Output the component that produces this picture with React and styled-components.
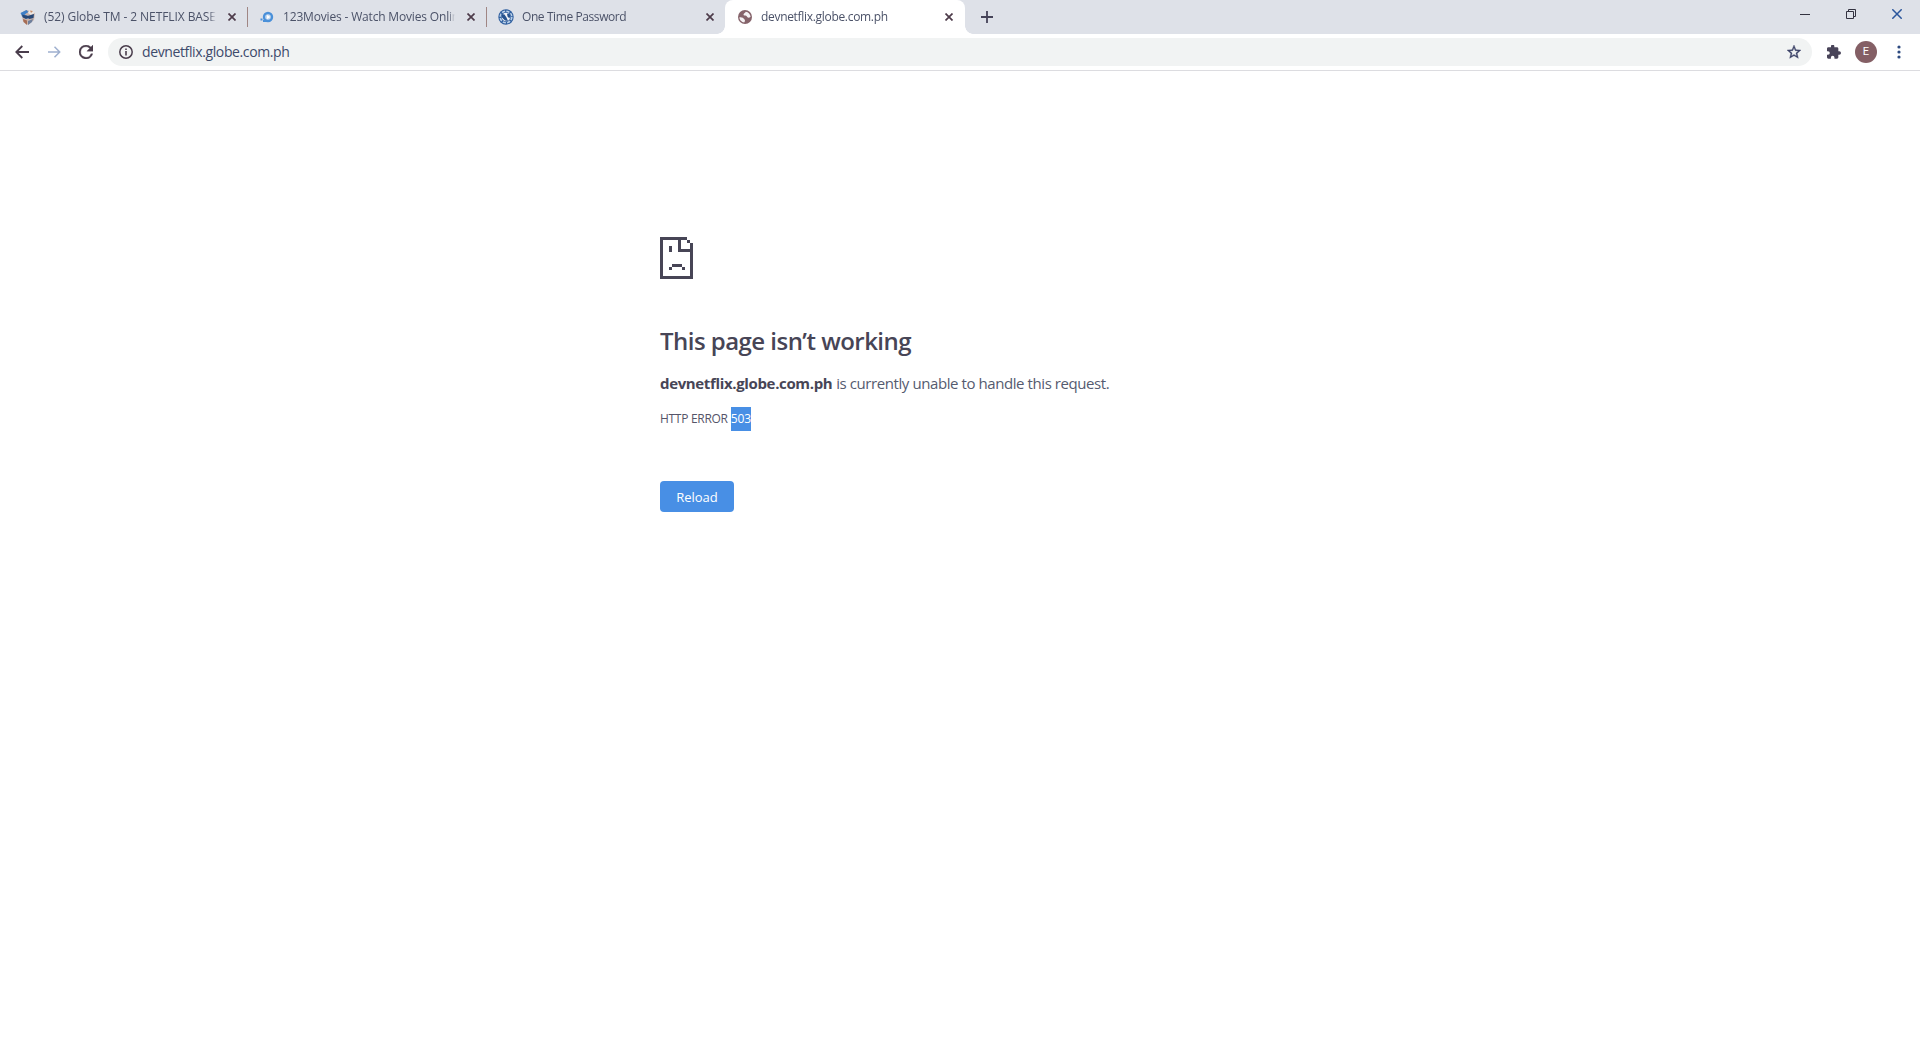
import React from 'react';
import styled, { createGlobalStyle } from 'styled-components';

const GlobalStyle = createGlobalStyle`
  * {
    box-sizing: border-box;
  }

  body {
    margin: 0;
    background: #fff;
    font-family: 'Open Sans', 'Noto Sans', sans-serif;
    color: #474556;
    overflow: hidden;
  }

  h1, p {
    margin: 0;
  }
`;

const CloseIcon = () => (
  <svg width="8" height="8" viewBox="0 0 8 8">
    <path d="M0.5 0.5L7.5 7.5M7.5 0.5L0.5 7.5" stroke="#4d3b4a" strokeWidth="1.7" />
  </svg>
);

const BoxFavicon = () => (
  <svg width="16" height="16" viewBox="0 0 16 16">
    <path d="M1 4l5-3 4 1 5 2-1 7-6 5-5-4z" fill="#c9b3aa" />
    <path d="M0.500 4l6-3 2 2-4 2.500 4 1.500-1 3-5-2z" fill="#3f80c8" />
    <path d="M9 2l3-1 3 3-4 2-3-2z" fill="#ece6e3" />
    <path d="M10 1.500l3 .5-2 2z" fill="#c98d67" />
    <path d="M2 5.500l5.500 1.500 6.500-2-.5 4-4 1-2-1-1.500 1-3-1.500z" fill="#294876" />
    <path d="M3 10l4 1.500V16l-3.500-3z" fill="#a66d55" />
    <path d="M8 12l5-2-1 3-4 3z" fill="#6e7f9d" />
  </svg>
);

const PlayFavicon = () => (
  <svg width="16" height="16" viewBox="0 0 16 16">
    <circle cx="9" cy="8" r="5.200" fill="#4a90d9" />
    <circle cx="9" cy="8" r="2.800" fill="#c7daf0" />
    <path d="M8 6l3.200 2L8 10z" fill="#fff" />
    <path d="M1.500 10.500h2M4 12h3" stroke="#4a90d9" strokeWidth="2" />
  </svg>
);

const GlobeFavicon = () => (
  <svg width="16" height="16" viewBox="0 0 16 16">
    <circle cx="8" cy="8" r="7.700" fill="#2f5f9f" />
    <circle cx="8" cy="8" r="5.800" fill="none" stroke="#b9cfe8" strokeWidth="1.600" strokeDasharray="3.200 1.300" />
    <circle cx="8" cy="8" r="4.300" fill="#f1f3f7" />
    <path d="M3.500 5l3 .5 2 3 1.500 3.500-3-.5-3-3zM9 4.500l3.500 1-1 4-2-2z" fill="#28548f" />
  </svg>
);

const WorldFavicon = () => (
  <svg width="14" height="14" viewBox="2 2 20 20">
    <circle cx="12" cy="12" r="10" fill="#85636a" />
    <path d="M4 12.500c2 0 5 0 6 1.500s2 1.500 2 3-1 2-1 3c-4-.5-7-4-7-7.500zM13 4.500c4 .5 6.500 3.500 7 7-1.500 1.500-3 2-4.500 1-1.500-1.200-1-2.500-3-2.500s-3-.5-2.500-2 2.500-1.500 3-3.500z" fill="#f4f1f3" />
  </svg>
);

const TABS = [
  { title: '(52) Globe TM - 2 NETFLIX BASED', icon: BoxFavicon, spacing: -0.08 },
  { title: '123Movies - Watch Movies Online', icon: PlayFavicon, spacing: -0.17 },
  { title: 'One Time Password', icon: GlobeFavicon, spacing: -0.41 },
  { title: 'devnetflix.globe.com.ph', icon: WorldFavicon, spacing: -0.31, active: true },
];

export default function App() {
  return (
    <>
      <GlobalStyle />
      <TabStrip>
        {TABS.map(({ title, icon: Icon, active, spacing }, index) => (
          <Tab key={title} $active={active} $divider={index < 2}>
            <Favicon>
              <Icon />
            </Favicon>
            <TabTitle $spacing={spacing}>{title}</TabTitle>
            <CloseIcon />
          </Tab>
        ))}
        <NewTab>
          <svg width="12" height="12" viewBox="0 0 12 12">
            <path d="M6 0v12M0 6h12" stroke="#454358" strokeWidth="1.8" />
          </svg>
        </NewTab>
        <WindowControls>
          <svg width="10" height="10" viewBox="0 0 10 10">
            <path d="M0 5.500h10" stroke="#333240" />
          </svg>
          <svg width="10" height="10" viewBox="0 0 10 10" fill="none" stroke="#333240">
            <path d="M0.500 2.500h7v7h-7zM2.500 2.500v-2h7v7h-2" />
          </svg>
          <svg width="10" height="10" viewBox="0 0 10 10">
            <path d="M0.300 0.300l9.400 9.400M9.700 0.300l-9.400 9.400" stroke="#2a559c" strokeWidth="1.500" />
          </svg>
        </WindowControls>
      </TabStrip>

      <Toolbar>
        <NavButtons>
          <svg width="14" height="14" viewBox="0 0 14 14" fill="none" stroke="#4a3d4c" strokeWidth="1.8">
            <path d="M14 7H1.500M7.300 1L1.300 7l6 6" />
          </svg>
          <svg width="14" height="14" viewBox="0 0 14 14" fill="none" stroke="#9fb0cf" strokeWidth="1.500">
            <path d="M1 7h11.500M7.500 1.800L12.700 7l-5.200 5.200" />
          </svg>
          <svg width="14" height="14" viewBox="4 4 16 16" fill="#4a3d4c" stroke="#4a3d4c" strokeWidth="0.4">
            <path d="M17.650 6.350A7.960 7.960 0 0 0 12 4a8 8 0 1 0 7.730 10h-2.080A6 6 0 1 1 12 6c1.660 0 3.140.69 4.220 1.780L13 11h7V4z" />
          </svg>
        </NavButtons>
        <AddressBar>
          <svg width="14" height="14" viewBox="0 0 14 14" fill="none" stroke="#4a3d4c">
            <circle cx="7" cy="7" r="6.200" strokeWidth="1.500" />
            <path d="M7 6v4.500M7 3.500v1.500" strokeWidth="1.600" />
          </svg>
          <Url>devnetflix.globe.com.ph</Url>
          <svg width="14" height="14" viewBox="2 2 20 20" fill="#3d4468" stroke="#3d4468" strokeWidth="0.5">
            <path d="M22 9.240l-7.190-.62L12 2 9.190 8.630 2 9.240l5.460 4.730L5.820 21 12 17.270 18.180 21l-1.630-7.030L22 9.240zM12 15.400l-3.760 2.270 1-4.280-3.320-2.880 4.380-.38L12 6.100l1.710 4.040 4.380.38-3.320 2.880 1 4.280L12 15.400z" />
          </svg>
        </AddressBar>
        <Actions>
          <svg width="14" height="14" viewBox="2 1.500 21 21" fill="#494459">
            <path d="M20.500 11H19V7c0-1.100-.9-2-2-2h-4V3.500a2.500 2.500 0 0 0-5 0V5H4c-1.100 0-1.990.9-1.990 2v3.800H3.500a2.700 2.700 0 0 1 0 5.400H2V20c0 1.100.9 2 2 2h3.800v-1.500a2.700 2.700 0 0 1 5.400 0V22H17c1.100 0 2-.9 2-2v-4h1.500a2.500 2.500 0 0 0 0-5z" />
          </svg>
          <Profile>E</Profile>
          <svg width="4" height="14" viewBox="0 0 4 14" fill="#2d4a80">
            <circle cx="2" cy="2" r="1.600" />
            <circle cx="2" cy="7" r="1.600" />
            <circle cx="2" cy="12" r="1.600" />
          </svg>
        </Actions>
      </Toolbar>

      <ErrorPage>
        <svg width="33" height="42" viewBox="0 0 11 14" fill="#474556" shapeRendering="crispEdges">
          <path d="M0 0h9v1H0zM0 1h1v12H0zM0 13h11v1H0zM10 2h1v11h-1zM9 1h1v1H9zM6 1h1v4H6zM7 4h3v1H7zM3 3h1v2H3zM4 9h3.300v1H4zM3 10h1v1H3zM7.300 10h1v1h-1z" />
        </svg>
        <Heading>This page isn’t working</Heading>
        <Message>
          <strong>devnetflix.globe.com.ph</strong> <span>is currently unable to handle this request.</span>
        </Message>
        <ErrorCode>
          HTTP ERROR <Selected>503</Selected>
        </ErrorCode>
        <ReloadButton>Reload</ReloadButton>
      </ErrorPage>
    </>
  );
}

const TabStrip = styled.header`
  display: flex;
  height: 34px;
  padding-left: 8px;
  background: #dee1e8;
`;

const Tab = styled.div`
  position: relative;
  display: flex;
  align-items: center;
  width: ${({ $active }) => ($active ? 240 : 239)}px;
  padding: 0 ${({ $active }) => ($active ? 12 : 11)}px 0 12px;
  background: ${({ $active }) => ($active ? '#fff' : 'transparent')};
  border-radius: 8px 8px 0 0;

  /* thin line between two inactive tabs */
  ${({ $divider }) => $divider && `
    &::after {
      content: '';
      position: absolute;
      right: -1px;
      top: 7px;
      width: 1px;
      height: 20px;
      background: #a08684;
    }
  `}

  /* curved feet of the active tab */
  ${({ $active }) => $active && `
    &::before, &::after {
      content: '';
      position: absolute;
      bottom: 0;
      width: 8px;
      height: 8px;
    }
    &::before {
      left: -8px;
      background: radial-gradient(circle at 0 0, transparent 7.5px, #fff 8px);
    }
    &::after {
      right: -8px;
      background: radial-gradient(circle at 100% 0, transparent 7.5px, #fff 8px);
    }
  `}
`;

const Favicon = styled.span`
  display: flex;
  align-items: center;
  justify-content: center;
  width: 16px;
  margin-right: 8px;
`;

const TabTitle = styled.span`
  flex: 1;
  margin-right: 12px;
  overflow: hidden;
  white-space: nowrap;
  font-size: 12px;
  line-height: 18px;
  letter-spacing: ${({ $spacing }) => $spacing}px;
  color: #4b5268;
  mask-image: linear-gradient(to left, transparent, #000 7px);
`;

const NewTab = styled.div`
  display: flex;
  align-items: center;
  margin-left: 16px;
`;

const WindowControls = styled.div`
  display: flex;
  gap: 36px;
  margin-left: auto;
  padding: 9px 18px 0 0;
`;

const Toolbar = styled.div`
  display: flex;
  align-items: center;
  height: 37px;
  padding: 0 19px 0 15px;
  border-bottom: 1px solid #dcdce0;
`;

const NavButtons = styled.div`
  display: flex;
  gap: 18px;
  width: 93px;
`;

const AddressBar = styled.div`
  display: flex;
  flex: 1;
  align-items: center;
  height: 28px;
  padding: 0 11px;
  border-radius: 14px;
  background: #f1f3f3;
`;

const Url = styled.span`
  flex: 1;
  margin-left: 9px;
  font-size: 14px;
  line-height: 20px;
  letter-spacing: -0.38px;
  color: #3d4a6b;
`;

const Actions = styled.div`
  display: flex;
  align-items: center;
  margin-left: 15px;

  svg:last-child {
    margin-left: 20px;
  }
`;

const Profile = styled.span`
  width: 22px;
  height: 22px;
  margin-left: 14px;
  border-radius: 50%;
  background: #845f65;
  color: #fff;
  font: 11px/22px Roboto, sans-serif;
  text-align: center;
`;

const ErrorPage = styled.main`
  width: 600px;
  margin: 166px auto 0;

  > svg {
    display: block;
  }
`;

const Heading = styled.h1`
  margin-top: 46px;
  font-size: 24px;
  font-weight: 600;
  line-height: 32px;
  letter-spacing: -0.53px;
  white-space: nowrap;
`;

const Message = styled.p`
  margin-top: 14px;
  font-size: 15px;
  line-height: 24px;
  white-space: nowrap;

  strong {
    font-weight: 700;
    letter-spacing: -0.35px;
  }

  span {
    letter-spacing: -0.42px;
    color: #555b70;
  }
`;

const ErrorCode = styled.p`
  display: flex;
  gap: 3px;
  margin-top: 12px;
  font-size: 12px;
  line-height: 24px;
  letter-spacing: -0.3px;
  color: #555468;
`;

const Selected = styled.span`
  background: #488fe5;
  color: #fff;
  letter-spacing: -0.1px;
`;

const ReloadButton = styled.button`
  display: block;
  width: 74px;
  height: 31px;
  margin-top: 50px;
  padding: 0;
  border: 0;
  border-radius: 4px;
  background: #488fe5;
  color: #fff;
  font: 13px 'Open Sans', sans-serif;
`;
